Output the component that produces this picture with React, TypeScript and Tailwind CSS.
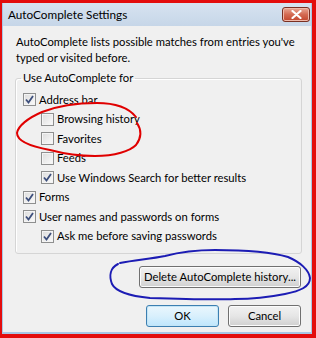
import React from 'react';

type Row = { label: string; checked: boolean; nested?: boolean };

const rows: Row[] = [
  { label: 'Address bar', checked: true },
  { label: 'Browsing history', checked: false, nested: true },
  { label: 'Favorites', checked: false, nested: true },
  { label: 'Feeds', checked: false, nested: true },
  { label: 'Use Windows Search for better results', checked: true, nested: true },
  { label: 'Forms', checked: true },
  { label: 'User names and passwords on forms', checked: true },
  { label: 'Ask me before saving passwords', checked: true, nested: true },
];

const CheckBox: React.FC<{ checked: boolean }> = ({ checked }) => (
  <span className="flex h-[13px] w-[13px] shrink-0 items-center justify-center border border-[#8e8f8f] bg-gradient-to-br from-[#dcdcdc] to-[#fbfbfb] shadow-[inset_0_0_0_1px_#f4f4f4]">
    {checked && (
      <svg width="9" height="9" viewBox="0 0 9 9">
        <path d="M1 4.5 L3.5 7.5 L8 1" fill="none" stroke="#3d4f7c" strokeWidth="1.8" />
      </svg>
    )}
  </span>
);

const Button: React.FC<{ children: React.ReactNode; primary?: boolean; className?: string }> = ({
  children,
  primary,
  className = '',
}) => (
  <button
    className={`flex h-[22px] items-center justify-center whitespace-nowrap rounded-[3px] border text-[11.25px] text-black ${
      primary
        ? 'border-[#3c7fb1] bg-gradient-to-b from-[#eaf6fd] via-[#d9f0fc] to-[#bee6fd] shadow-[inset_0_0_0_1px_#c4e5f6]'
        : 'border-[#707070] bg-gradient-to-b from-[#f2f2f2] via-[#e6e6e6] to-[#d0d0d0] shadow-[inset_0_0_0_1px_#fcfcfc]'
    } ${className}`}
  >
    {children}
  </button>
);

export default function App() {
  return (
    <div
      className="relative h-[338px] w-[316px] overflow-hidden bg-[#e30d0d] pb-[4px] pl-[2px] pr-[4px] pt-[3px] text-[11.25px] leading-[16px] text-black"
      style={{ fontFamily: 'Lato, "Noto Sans", sans-serif' }}
    >
      <div className="flex h-full flex-col border-b-[2px] border-l border-r border-[#a8c6e4] bg-[#f0f0f0]">
        {/* Title bar */}
        <div className="flex h-[23px] shrink-0 items-start justify-between bg-gradient-to-b from-[#d7e3f0] to-[#c6d6e8] pl-[5px] pr-[1px]">
          <span className="mt-[4px] text-[11.75px]">AutoComplete Settings</span>
          <span className="mt-[4px] flex h-[15px] w-[28px] items-center justify-center rounded-[3px] border border-[#7a3022] bg-gradient-to-b from-[#e8a896] via-[#d46a52] to-[#c2452c] shadow-[inset_0_0_0_1px_#f0b9aa]">
            <svg width="11" height="9" viewBox="0 0 11 9">
              <path d="M1.5 1 L9.5 8 M9.5 1 L1.5 8" stroke="#fff" strokeWidth="2.2" strokeLinecap="round" />
            </svg>
          </span>
        </div>

        {/* Body */}
        <div className="flex flex-1 flex-col pl-[12px] pt-[8px]">
          <p className="ml-[1px] w-[292px]">
            AutoComplete lists possible matches from entries you've typed or visited before.
          </p>

          <fieldset className="mt-[4px] w-[287px] rounded-[3px] border border-[#d5d5d5] pb-[7px] pl-[7px] pt-[4px] shadow-[inset_1px_1px_0_#fff]">
            <legend className="ml-[-2px] px-[2px]">Use AutoComplete for</legend>
            {rows.map((r) => (
              <div
                key={r.label}
                className={`flex h-[19.5px] items-center gap-[3px] ${r.nested ? 'pl-[18px]' : ''}`}
              >
                <CheckBox checked={r.checked} />
                <span className="whitespace-nowrap">{r.label}</span>
              </div>
            ))}
          </fieldset>

          <div className="mt-[12px] flex w-[286px] justify-end">
            <Button className="w-[162px]">Delete AutoComplete history...</Button>
          </div>

          <div className="mt-[17px] flex w-[286px] justify-end gap-[9px]">
            <Button primary className="w-[73px]">
              OK
            </Button>
            <Button className="w-[73px]">Cancel</Button>
          </div>
        </div>
      </div>

      {/* Hand-drawn annotations */}
      <svg className="pointer-events-none absolute left-0 top-0" width="316" height="338" viewBox="0 0 316 338">
        <path
          d="M136 117 C128 107 115 103 97 103 C80 103 60 105 42 112 C28 118 18 126 17 133 C17 140 28 146 50 150 C65 154 80 156 95 156 C115 156 130 151 136 145 C142 137 141 129 137 123"
          fill="none"
          stroke="#e00000"
          strokeWidth="2"
          strokeLinecap="round"
        />
        <path
          d="M120 263 C135 260 150 259 165 256 C180 252 195 250 215 250 C240 250 268 251 288 257 C300 262 309 270 310 278 C310 287 300 291 285 294 C270 297 255 299 235 299 C210 300 180 299 150 298 C130 296 116 292 112 284 C109 276 110 268 118 264"
          fill="none"
          stroke="#1c1cb4"
          strokeWidth="2"
          strokeLinecap="round"
        />
      </svg>
    </div>
  );
}
